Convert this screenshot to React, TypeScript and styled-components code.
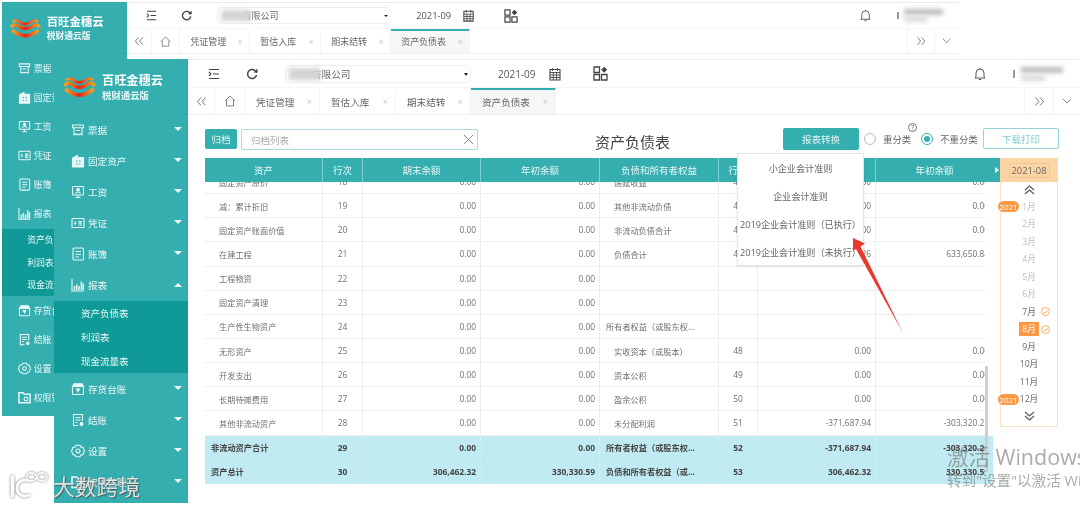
import React from "react";
import styled, { createGlobalStyle } from "styled-components";

const TEAL = "#35aeb0";
const CJK = `"Open Sans", "Noto Sans CJK SC", sans-serif`;
const LP = "\uFF08";
const RP = "\uFF09";
const COLON = "\uFF1A";

const Global = createGlobalStyle`
  html, body { margin: 0; padding: 0; background: #fff; overflow: hidden; }
  * { box-sizing: border-box; }
`;

const Desktop = styled.div`
  position: relative; width: 1080px; height: 506px; overflow: hidden; background: #fff;
  font-family: ${CJK}; filter: blur(0.5px);
`;
const WindowFrame = styled.div<{ $rear?: boolean }>`
  position: absolute; display: flex; align-items: flex-start; width: 1026px; height: 444px;
  left: ${(p) => (p.$rear ? "2px" : "54px")}; top: ${(p) => (p.$rear ? "2px" : "59px")};
  ${(p) => (p.$rear ? "zoom: 0.933; left: 2.1px; top: 2.1px;" : "height: 447px;")}
  background: #fff;
`;
const Sidebar = styled.aside`
  width: 134px; height: 444px; flex: none; background: ${TEAL}; color: #fff;
`;
const Brand = styled.div<{ $rear?: boolean }>`
  height: ${(p) => (p.$rear ? 56 : 55)}px; display: flex; align-items: center; padding: 3px 0 0 9px; gap: 6px;
  border-bottom: 1px solid rgba(0,0,0,.03);
`;
const BrandText = styled.div`display: flex; flex-direction: column; gap: 1px;`;
const BrandName = styled.div`font-size: 12.2px; font-weight: 700; line-height: 15px; color: #fff;`;
const BrandSub = styled.div`font-size: 9.4px; font-weight: 700; line-height: 13px; color: #eefafa;`;
const MenuItem = styled.div`
  height: 31px; display: flex; align-items: center; padding: 0 6px 0 17px; font-size: 9.6px; color: #e9f7f7;
`;
const MenuLabel = styled.span`margin-left: 3px; flex: 1; white-space: nowrap;`;
const SubPanel = styled.div`
  background: #0f9a98; height: 72px; margin-top: 1px; padding-top: 0;
`;
const SubItem = styled.div`
  height: 24px; display: flex; align-items: center; padding-left: 27px; font-size: 9.5px; color: #e9f7f7;
`;
const Main = styled.div`flex: 1; min-width: 0; display: flex; flex-direction: column; border-top: 1px solid #ececec;`;
const ToolBar = styled.div`
  height: 28px; display: flex; align-items: center; padding: 0 17px 0 19px; color: #444; border-bottom: 1px solid #f6f6f6;
`;
const ToolIcon = styled.span<{ $ml?: number }>`
  display: inline-flex; flex: none; margin-left: ${(p) => p.$ml ?? 0}px; color: #444;
`;
const CompanySelect = styled.div`
  position: relative; width: 186px; height: 18px; margin-left: 26px; border: 1px solid #eee; border-radius: 5px;
  font-size: 9.6px; color: #666; display: flex; align-items: center; padding-left: 26px;
`;
const SelectArrow = styled.span`
  position: absolute; right: 2px; top: 7px; border: 2.5px solid transparent; border-top: 3px solid #222;
`;
const Smudge = styled.span<{ $l: number; $t: number; $w: number; $h: number; $c?: string; $soft?: number }>`
  position: absolute; left: ${(p) => p.$l}px; top: ${(p) => p.$t}px; width: ${(p) => p.$w}px; height: ${(p) => p.$h}px;
  background: ${(p) => p.$c ?? "#c4c4c4"}; filter: blur(${(p) => p.$soft ?? 2}px);
`;
const DateText = styled.span`margin-left: 27px; font-size: 10px; color: #555;`;
const Spacer = styled.div`flex: 1;`;
const UserBlur = styled.div`position: relative; width: 50px; height: 18px; margin-left: 26px; flex: none;`;
const TabBar = styled.div`
  height: 27px; display: flex; align-items: stretch; border-bottom: 1px solid #eee;
`;
const TabCell = styled.div<{ $w: number }>`
  width: ${(p) => p.$w}px; flex: none; display: flex; align-items: center; justify-content: center;
  border-right: 1px solid #f4f4f4; color: #666;
`;
const EndCell = styled(TabCell)`border-right: none; border-left: 1px solid #f4f4f4;`;
const Tab = styled.div<{ $w: number; $active?: boolean }>`
  width: ${(p) => p.$w}px; flex: none; display: flex; align-items: center; justify-content: space-between;
  padding: 0 7px 0 11px; font-size: 9.6px; color: #666; white-space: nowrap;
  border-right: 1px solid #f4f4f4;
  background: ${(p) => (p.$active ? "#f6f6f6" : "#fff")};
  border-top: 1px solid ${(p) => (p.$active ? TEAL : "transparent")};
  box-shadow: ${(p) => (p.$active ? `inset 0 1px 0 ${TEAL}` : "none")};
`;
const TabClose = styled.span`font-size: 9px; color: #c4c4c4;`;

const Content = styled.div`padding: 14px 0 0 17px; width: 892px;`;
const Actions = styled.div`height: 29px; display: flex; align-items: flex-start; width: 854px;`;
const ArchiveBtn = styled.button`
  width: 32px; height: 20px; padding: 0; border: none; border-radius: 2px; background: ${TEAL}; color: #e6f7f7; font: 9.6px ${CJK};
`;
const ArchiveInput = styled.div`
  width: 237px; height: 21px; margin-left: 4px; border: 1px solid #a5dcdc; border-radius: 2px; padding: 0 3px 0 9px;
  display: flex; align-items: center; justify-content: space-between; color: #aaa; font-size: 9.5px;
`;
const Title = styled.h1`
  flex: 1; margin: 0; padding: 2px 0 0 4px; text-align: center; font-size: 15px; line-height: 22px; font-weight: 400; color: #444;
`;
const PrimaryBtn = styled.button`
  width: 76px; height: 22px; margin-top: -1px; border: none; border-radius: 2px; background: ${TEAL}; color: #dff4f4; font: 9.5px ${CJK};
`;
const RadioGroup = styled.div`
  position: relative; display: flex; align-items: center; height: 20px; margin-left: 5px; width: 119px; font-size: 9.4px; color: #666;
`;
const Radio = styled.span<{ $on?: boolean; $ml?: number }>`
  width: 12px; height: 12px; flex: none; border-radius: 50%; margin-left: ${(p) => p.$ml ?? 0}px; margin-right: 7px;
  border: 1px solid ${(p) => (p.$on ? TEAL : "#bbb")}; display: flex; align-items: center; justify-content: center;
  &::after { content: ""; width: 6px; height: 6px; border-radius: 50%; background: ${(p) => (p.$on ? TEAL : "transparent")}; }
`;
const HelpMark = styled.span`
  position: absolute; left: 44px; top: -6px; width: 9px; height: 9px; border: 1px solid #777; border-radius: 50%;
  font-size: 7px; line-height: 8px; text-align: center; color: #555;
`;
const OutlineBtn = styled.button`
  width: 76px; height: 21px; margin-top: -1px; background: #fff; border: 1px solid #96d6d6; border-radius: 2px; color: #84cccc; font: 9.5px ${CJK};
`;
const TableRow = styled.div`display: flex; align-items: flex-start;`;
const TableBox = styled.div`width: 788px; flex: none;`;
const HeadRow = styled.div`
  display: grid; grid-template-columns: 118px 40px 118px 119px 119px 39px 118px 117px; height: 24px; background: ${TEAL};
`;
const HeadCell = styled.div`
  display: flex; align-items: center; justify-content: center; font-size: 9.5px; color: #e6f7f7; border-right: 1px solid #7fcfd0;
  &:last-child { border-right: none; }
`;
const Body = styled.div`height: 302px; overflow: hidden;`;
const Row = styled.div<{ $total?: boolean; $clip?: boolean }>`
  display: grid; grid-template-columns: 118px 40px 118px 119px 119px 39px 118px 109px 8px; height: 24.15px;
  margin-top: ${(p) => (p.$clip ? "-12px" : "0")};
  background: ${(p) => (p.$total ? "#c1ebf3" : "transparent")};
  font-weight: ${(p) => (p.$total ? 700 : 400)};
  color: ${(p) => (p.$total ? "#444" : "#707070")};
`;
const Cell = styled.div<{ $align?: string; $pad?: number; $total?: boolean }>`
  display: flex; align-items: center; min-width: 0; overflow: hidden; white-space: nowrap;
  justify-content: ${(p) => p.$align ?? "flex-start"};
  padding: 0 4px 0 ${(p) => p.$pad ?? 4}px;
  font-size: 8.2px; 
  border-right: 1px solid ${(p) => (p.$total ? "rgba(255,255,255,.15)" : "#eee")};
  border-bottom: 1px solid ${(p) => (p.$total ? "transparent" : "#eee")};
`;
const NumCell = styled(Cell)`font-size: 8.4px;`;
const ClipCell = styled(NumCell)`
  padding: 0; border-right: none; justify-content: flex-end;
`;
const ClipText = styled.span`margin-right: -4px; flex: none;`;
const Gutter = styled.div`width: 7px; height: 24px; flex: none; background: ${TEAL}; display: flex; align-items: center; justify-content: center;
  &::after { content: ""; border: 3px solid transparent; border-left: 4px solid #fff; margin-left: 4px; }
`;
const Calendar = styled.div`
  position: relative; width: 58px; height: 269px; flex: none; border: 1px solid #fde0c4; border-top: none; display: flex; flex-direction: column; align-items: center;
`;
const CalHead = styled.div`
  width: 58px; height: 24px; margin: 0 -1px; background: #fdd5a5; display: flex; align-items: center; justify-content: center; flex: none;
`;
const CalInput = styled.div`
  width: 41px; height: 15px; border: 1px solid #eec49a; border-radius: 2px; font-size: 9.4px; line-height: 13px; text-align: center; color: #666;
`;
const CalArrow = styled.div`height: 16px; display: flex; align-items: center; justify-content: center; color: #555; flex: none;`;
const Month = styled.div`
  position: relative; height: 17.5px; width: 56px; flex: none; display: flex; align-items: center; justify-content: center; font-size: 8.6px;
`;
const MonthLabel = styled.span<{ $state: string }>`
  width: 20px; text-align: center; line-height: 14px;
  background: ${(p) => (p.$state === "now" ? "#fb9a42" : "transparent")};
  color: ${(p) => (p.$state === "now" ? "#fff" : p.$state === "off" ? "#bdbdbd" : "#666")};
`;
const YearBadge = styled.span`
  position: absolute; left: -3px; top: 3px; width: 21px; height: 11px; border-radius: 6px; background: #fb9a42; color: #fff;
  font-size: 8px; line-height: 11px; text-align: center;
`;
const DoneMark = styled.span`position: absolute; left: 40px; top: 4px; display: inline-flex; color: #fb9a42;`;
const Dropdown = styled.div`
  position: absolute; left: 737px; top: 153px; width: 127px; height: 113px; background: #fff; border: 1px solid #e6e6e6;
  box-shadow: 0 1px 3px rgba(0,0,0,.06);
`;
const DropItem = styled.div`
  height: 28px; display: flex; align-items: center; justify-content: center; white-space: nowrap; font-size: 9.1px; color: #666;
`;
const ScrollThumb = styled.div`position: absolute; left: 985px; top: 366px; width: 3px; height: 106px; background: #cfcfcf;`;
const Overlay = styled.svg`position: absolute; left: 0; top: 0; pointer-events: none;`;
const ActivateBig = styled.div`
  position: absolute; left: 947px; top: 442px; font-size: 21.5px; line-height: 30px; color: rgba(120,120,120,.62); white-space: nowrap;
`;
const ActivateSmall = styled.div`
  position: absolute; left: 947px; top: 471px; font-size: 14.6px; line-height: 19px; color: rgba(120,120,120,.62); white-space: nowrap;
`;
const StampText = styled.div`
  position: absolute; left: 53px; top: 472px; font-size: 21.8px; line-height: 30px; color: rgba(236,236,236,.92); white-space: nowrap;
  text-shadow: 1px 1px 1px rgba(70,70,70,.75), -0.5px 0 1px rgba(70,70,70,.45);
`;

const Svg: React.FC<React.PropsWithChildren<{ w?: number; h?: number; vb?: string }>> = ({ w = 14, h = 14, vb = "0 0 14 14", children }) => (
  <svg width={w} height={h} viewBox={vb} fill="none" stroke="currentColor" strokeWidth="1.1" style={{ flex: "none" }}>{children}</svg>
);
const icons: Record<string, React.ReactNode> = {
  ticket: <Svg><path d="M1.500 2h11v2.800h-11zM3 4.800v7l1.700-.8 1.100.8 1.200-.8 1.200.8 1.100-.8 1.700.8v-7M5 7.500h4" /></Svg>,
  asset: <Svg><path d="M1.500 13V4l5-2.500v2h6V13z" fill="currentColor" /><path d="M5 7h1.500M8 7h1.500M5 10h1.500M8 10h1.500" stroke={TEAL} /></Svg>,
  salary: <Svg><rect x="1.500" y="1.500" width="11" height="8.500" rx=".8" /><circle cx="7" cy="4.600" r="1.400" fill="currentColor" /><path d="M4.500 8.500c.5-2 4.500-2 5 0M4.500 12.500h5M7 10v2.500" /></Svg>,
  voucher: <Svg><rect x="1" y="2.500" width="12" height="9" rx=".8" /><path d="M3 5.500l1.200 1.200L5.400 5.500M4.200 6.700V9M3.200 7.500h2" strokeWidth=".9" /><path d="M7.500 5.500h3.500M7.500 7.200h3.500M7.500 9h3.500" strokeWidth="1.200" /></Svg>,
  ledger: <Svg><rect x="2" y="1" width="10.500" height="12" rx="1.200" /><path d="M4.500 4.500h5.500M4.500 7.200h5.500M4.500 10h3.500" /></Svg>,
  report: <Svg><path d="M1 1v12h12" /><path d="M3.500 12V8M5.800 12V6.500M8.100 12V8M10.400 12V3.500M12.300 12V5.500" strokeWidth="1.500" /></Svg>,
  stock: <Svg><path d="M3 1.800h8L12.500 4.500h-11z" fill="currentColor" /><rect x="1.500" y="4.500" width="11" height="8" rx=".6" /><path d="M5.500 7h3L7 9.500zM7 9v1.500" fill="currentColor" /></Svg>,
  close: <Svg><path d="M11.500 8V1.500h-9v11H7M4.500 4.500h5M4.500 7h5M4.500 9.500h2" /><circle cx="10.500" cy="11" r="1.400" fill="currentColor" /></Svg>,
  gear: <Svg><path d="M5 1.300h4l1 1.800 2 .1L13.400 7 12 10.800l-2 .1-1 1.800H5l-1-1.800-2-.1L.6 7 2 3.200l2-.1z" /><circle cx="7" cy="7" r="2" /></Svg>,
  perm: <Svg><path d="M1 12.500V2h4.500l1.200 1.500H13v9z" strokeWidth="1.600" /><circle cx="8.500" cy="8.500" r="2" strokeWidth="1.300" /></Svg>,
};
const Caret = ({ up }: { up?: boolean }) => (
  <svg width="8" height="5" viewBox="0 0 8 5" style={{ flex: "none" }}>
    <path d={up ? "M0 5L4 1l4 4z" : "M0 0h8L4 4z"} fill="#eaf8f8" />
  </svg>
);
const Logo = ({ id }: { id: string }) => (
  <svg width="33" height="22" viewBox="0 0 33 22" fill="none" style={{ flex: "none" }}>
    <defs>
      <linearGradient id={id} x1="0" x2="1" y1="0" y2="0">
        <stop offset="0" stopColor="#f7a51f" /><stop offset=".3" stopColor="#ee5a1c" />
        <stop offset=".5" stopColor="#e0251e" /><stop offset=".7" stopColor="#ee5a1c" /><stop offset="1" stopColor="#f7a51f" />
      </linearGradient>
    </defs>
    <path d="M3 3Q6 1 9 2Q16 9 24 2Q27 1 30 3" stroke={`url(#${id})`} strokeWidth="2.600" />
    <path d="M1.500 9Q4 5 7 6.500Q16.500 14 26 6.500Q29 5 31.500 9" stroke={`url(#${id})`} strokeWidth="3.400" />
    <path d="M2.500 12Q16.500 24 30.500 12" stroke={`url(#${id})`} strokeWidth="3.800" />
  </svg>
);
const Indent = () => <Svg><path d="M2 2.500h10M6 7h6M2 11.500h10M2 5l2 2-2 2" /></Svg>;
const Refresh = () => <Svg><path d="M11.500 8a4.500 4.500 0 1 1-1.300-4.200L12 5.300" strokeWidth="1.500" /><path d="M12.500 1.500v4h-4z" fill="currentColor" stroke="none" /></Svg>;
const CalIcon = () => <Svg><path d="M2 2.500h10V13H2z" /><path d="M4.500 1v3M9.500 1v3M2 5.500h10M2 8h10M2 10.500h10M5.300 5.500V13M8.600 5.500V13" strokeWidth=".9" /></Svg>;
const GridIcon = () => (
  <Svg w={15} h={15} vb="0 0 15 15"><path d="M1 1h5.500v5.500H1zM1 8.500h5.500V14H1zM8.500 8.500H14V14H8.500z" strokeWidth="1.300" /><path d="M11.200 .8l3 3-3 3-3-3z" fill="currentColor" stroke="none" /></Svg>
);
const Bell = () => <Svg><path d="M3 10V6a4 4 0 0 1 8 0v4l1 1H2zM5.800 12.500h2.400M7 1v1" strokeWidth=".9" /></Svg>;
const Home = () => <Svg><path d="M2 7l5-5 5 5M3.500 6v6h7V6" strokeWidth=".8" /></Svg>;
const Dbl = ({ dir }: { dir: string }) => (
  <Svg w={11} h={11} vb="0 0 11 11">
    <path d={dir === "l" ? "M5 1.500L1.500 5.500 5 9.500M9.500 1.500L6 5.500l3.500 4" : "M1.500 1.500L5 5.500 1.500 9.500M6 1.500l3.500 4-3.500 4"} strokeWidth=".9" />
  </Svg>
);
const Chevron = () => <Svg w={10} h={10} vb="0 0 10 10"><path d="M1 3l4 4 4-4" strokeWidth=".8" /></Svg>;
const DblV = ({ up }: { up?: boolean }) => (
  <svg width="11" height="10" viewBox="0 0 11 10" fill="none" stroke="currentColor" strokeWidth="1.100">
    <path d={up ? "M1 5l4.500-4L10 5M1 9l4.500-4L10 9" : "M1 1l4.500 4L10 1M1 5l4.500 4L10 5"} />
  </svg>
);
const Check = () => (
  <svg width="9" height="9" viewBox="0 0 9 9" fill="none" stroke="currentColor" strokeWidth=".8">
    <circle cx="4.500" cy="4.500" r="4" /><path d="M2.300 4.500l1.600 1.600 2.800-2.800" />
  </svg>
);
const CrossIcon = () => <svg width="11" height="11" viewBox="0 0 11 11" stroke="#888" strokeWidth="1" fill="none"><path d="M1 1l9 9M10 1l-9 9" /></svg>;

const menuTop = [["ticket", "票据"], ["asset", "固定资产"], ["salary", "工资"], ["voucher", "凭证"], ["ledger", "账簿"]];
const menuBottom = [["stock", "存货台账"], ["close", "结账"], ["gear", "设置"], ["perm", "权限管理"]];

const Item = ({ icon, label, up }: { icon: string; label: string; up?: boolean }) => (
  <MenuItem>{icons[icon]}<MenuLabel>{label}</MenuLabel><Caret up={up} /></MenuItem>
);

const AppWindow: React.FC<React.PropsWithChildren<{ rear?: boolean }>> = ({ rear, children }) => (
  <WindowFrame $rear={rear}>
    <Sidebar>
      <Brand $rear={rear}>
        <Logo id={rear ? "bowlRear" : "bowlFront"} />
        <BrandText><BrandName>百旺金穗云</BrandName><BrandSub>税财通云版</BrandSub></BrandText>
      </Brand>
      {menuTop.map(([i, l]) => <Item key={l} icon={i} label={l} />)}
      <Item icon="report" label="报表" up />
      <SubPanel>
        <SubItem>资产负债表</SubItem><SubItem>利润表</SubItem><SubItem>现金流量表</SubItem>
      </SubPanel>
      {menuBottom.map(([i, l]) => <Item key={l} icon={i} label={l} />)}
    </Sidebar>
    <Main>
      <ToolBar>
        <ToolIcon><Indent /></ToolIcon>
        <ToolIcon $ml={24}><Refresh /></ToolIcon>
        <CompanySelect>
          有限公司
          <Smudge $l={3} $t={2} $w={32} $h={12} $c="#d4d4d4" />
          <SelectArrow />
        </CompanySelect>
        <DateText>2021-09</DateText>
        <ToolIcon $ml={12}><CalIcon /></ToolIcon>
        <ToolIcon $ml={31}><GridIcon /></ToolIcon>
        <Spacer />
        <ToolIcon><Bell /></ToolIcon>
        <UserBlur>
          <Smudge $l={0} $t={5} $w={2} $h={8} $c="#999" $soft={0.6} />
          <Smudge $l={8} $t={2} $w={42} $h={6} $c="#bdbdbd" />
          <Smudge $l={8} $t={10} $w={24} $h={6} $c="#dcdcdc" />
        </UserBlur>
      </ToolBar>
      <TabBar>
        <TabCell $w={27}><Dbl dir="l" /></TabCell>
        <TabCell $w={30}><Home /></TabCell>
        <Tab $w={75}>凭证管理<TabClose>×</TabClose></Tab>
        <Tab $w={76}>暂估入库<TabClose>×</TabClose></Tab>
        <Tab $w={75}>期末结转<TabClose>×</TabClose></Tab>
        <Tab $w={85} $active>资产负债表<TabClose>×</TabClose></Tab>
        <Spacer />
        <EndCell $w={29}><Dbl dir="r" /></EndCell>
        <EndCell $w={27}><Chevron /></EndCell>
      </TabBar>
      {children}
    </Main>
  </WindowFrame>
);

type R = { a: string; n: string; b: string; c: string; d: string; m?: string; e?: string; f?: string; total?: boolean; flush?: boolean };
const Z = "0.00";
const rows: R[] = [
  { a: "固定资产原价", n: "18", b: Z, c: Z, d: "递延收益", m: "44", e: Z, f: Z },
  { a: `减${COLON}累计折旧`, n: "19", b: Z, c: Z, d: "其他非流动负债", m: "45", e: Z, f: Z },
  { a: "固定资产账面价值", n: "20", b: Z, c: Z, d: "非流动负债合计", m: "46", e: Z, f: Z },
  { a: "在建工程", n: "21", b: Z, c: Z, d: "负债合计", m: "47", e: "678,150.26", f: "633,650.84" },
  { a: "工程物资", n: "22", b: Z, c: Z, d: "" },
  { a: "固定资产清理", n: "23", b: Z, c: Z, d: "" },
  { a: "生产性生物资产", n: "24", b: Z, c: Z, d: `所有者权益${LP}或股东权...`, flush: true },
  { a: "无形资产", n: "25", b: Z, c: Z, d: `实收资本${LP}或股本${RP}`, m: "48", e: Z, f: Z },
  { a: "开发支出", n: "26", b: Z, c: Z, d: "资本公积", m: "49", e: Z, f: Z },
  { a: "长期待摊费用", n: "27", b: Z, c: Z, d: "盈余公积", m: "50", e: Z, f: Z },
  { a: "其他非流动资产", n: "28", b: Z, c: Z, d: "未分配利润", m: "51", e: "-371,687.94", f: "-303,320.25" },
  { a: "非流动资产合计", n: "29", b: Z, c: Z, d: `所有者权益${LP}或股东权...`, m: "52", e: "-371,687.94", f: "-303,320.25", total: true },
  { a: "资产总计", n: "30", b: "306,462.32", c: "330,330.59", d: `负债和所有者权益${LP}或...`, m: "53", e: "306,462.32", f: "330,330.59", total: true },
];
const heads = ["资产", "行次", "期末余额", "年初余额", "负债和所有者权益", "行次", "期末余额", "年初余额"];
const months = [
  ["1月", "off", "y"], ["2月", "off"], ["3月", "off"], ["4月", "off"], ["5月", "off"], ["6月", "off"],
  ["7月", "done"], ["8月", "now"], ["9月", "on"], ["10月", "on"], ["11月", "on"], ["12月", "on", "y"],
];

export default function App() {
  return (
    <>
      <Global />
      <Desktop>
        <AppWindow rear />
        <AppWindow>
          <Content>
            <Actions>
              <ArchiveBtn>归档</ArchiveBtn>
              <ArchiveInput>归档列表<CrossIcon /></ArchiveInput>
              <Title>资产负债表</Title>
              <PrimaryBtn>报表转换</PrimaryBtn>
              <RadioGroup>
                <Radio />重分类
                <HelpMark>?</HelpMark>
                <Radio $on $ml={10} />不重分类
              </RadioGroup>
              <OutlineBtn>下载打印</OutlineBtn>
            </Actions>
            <TableRow>
              <TableBox>
                <HeadRow>{heads.map((h, i) => <HeadCell key={i}>{h}</HeadCell>)}</HeadRow>
                <Body>
                  {rows.map((r, i) => (
                    <Row key={r.n} $total={r.total} $clip={i === 0}>
                      <Cell $pad={r.total ? 6 : 14} $total={r.total}>{r.a}</Cell>
                      <NumCell $align="center" $pad={4} $total={r.total}>{r.n}</NumCell>
                      <NumCell $align="flex-end" $total={r.total}>{r.b}</NumCell>
                      <NumCell $align="flex-end" $total={r.total}>{r.c}</NumCell>
                      <Cell $pad={r.total || r.flush ? 6 : 14} $total={r.total}>{r.d}</Cell>
                      <NumCell $align="center" $total={r.total}>{r.m}</NumCell>
                      <NumCell $align="flex-end" $total={r.total}>{r.e}</NumCell>
                      <ClipCell $total={r.total}><ClipText>{r.f}</ClipText></ClipCell>
                      <div />
                    </Row>
                  ))}
                </Body>
              </TableBox>
              <Gutter />
              <Calendar>
                <CalHead><CalInput>2021-08</CalInput></CalHead>
                <CalArrow><DblV up /></CalArrow>
                {months.map(([m, st, y]) => (
                  <Month key={m}>
                    {y && <YearBadge>2021</YearBadge>}
                    <MonthLabel $state={st}>{m}</MonthLabel>
                    {(st === "done" || st === "now") && <DoneMark><Check /></DoneMark>}
                  </Month>
                ))}
                <CalArrow><DblV /></CalArrow>
              </Calendar>
            </TableRow>
          </Content>
        </AppWindow>
        <Dropdown>
          <DropItem>小企业会计准则</DropItem>
          <DropItem>企业会计准则</DropItem>
          <DropItem>{`2019企业会计准则${LP}已执行${RP}`}</DropItem>
          <DropItem>{`2019企业会计准则${LP}未执行${RP}`}</DropItem>
        </Dropdown>
        <ScrollThumb />
        <Overlay width="1080" height="506" viewBox="0 0 1080 506">
          <path d="M853 238L865 243.500 860.500 246.500 902.500 332 856 249 853 251z" fill="#e8392f" />
          <g fill="none" style={{ filter: "drop-shadow(0.6px 0.6px 0.8px #777)" }} stroke="#fafafa" strokeLinecap="round">
            <path d="M12.500 477v19" strokeWidth="4" />
            <path d="M29 481c-6-3-12 1-12 7s6 10 12 7" strokeWidth="3" />
            <ellipse cx="31.500" cy="477" rx="5" ry="4" strokeWidth="1.800" />
            <ellipse cx="42" cy="477" rx="5" ry="4" strokeWidth="1.800" />
          </g>
        </Overlay>
        <StampText>大数跨境</StampText>
        <ActivateBig>激活 Windows</ActivateBig>
        <ActivateSmall>转到"设置"以激活 Windows。</ActivateSmall>
      </Desktop>
    </>
  );
}
